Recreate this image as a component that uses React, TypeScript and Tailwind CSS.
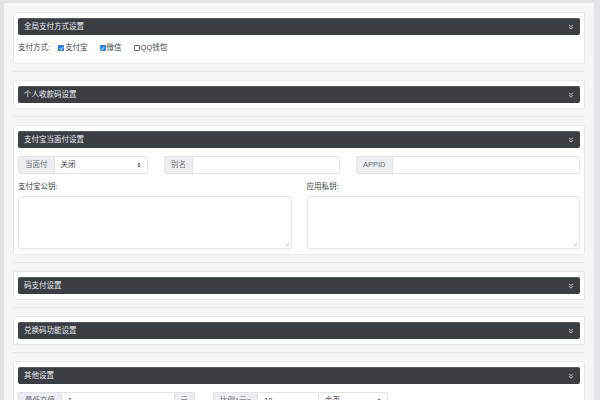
import type { ReactNode } from 'react'

const font = "font-['Liberation_Sans','Noto_Sans_CJK_SC',sans-serif]"

function DoubleDown() {
  return (
    <svg width="6" height="6" viewBox="0 0 6 6" className="text-[#9a9da2]">
      <path d="M1 0.8 L3 2.6 L5 0.8" fill="none" stroke="currentColor" strokeWidth="1.1" />
      <path d="M1 3.2 L3 5 L5 3.2" fill="none" stroke="currentColor" strokeWidth="1.1" />
    </svg>
  )
}

function UpDown() {
  return (
    <svg width="4" height="6" viewBox="0 0 4 6" className="text-[#555]">
      <path d="M0.3 2.4 L2 0.4 L3.7 2.4 Z" fill="currentColor" />
      <path d="M0.3 3.6 L2 5.6 L3.7 3.6 Z" fill="currentColor" />
    </svg>
  )
}

function Check({ checked, label }: { checked?: boolean; label: string }) {
  return (
    <span className="flex items-center gap-[1px]">
      {checked ? (
        <span className="flex h-[6px] w-[6px] items-center justify-center rounded-[1px] bg-[#2f7ee6]">
          <svg width="5" height="5" viewBox="0 0 5 5">
            <path d="M0.8 2.6 L2 3.8 L4.2 1.1" fill="none" stroke="#fff" strokeWidth="0.9" />
          </svg>
        </span>
      ) : (
        <span className="h-[6px] w-[6px] rounded-[1px] border border-[#6b6b6b] bg-white" />
      )}
      <span>{label}</span>
    </span>
  )
}

function Card({ title, children }: { title: string; children?: ReactNode }) {
  return (
    <div className="rounded-[2px] border border-[#e7e9ec] bg-white px-[4px] py-[5px]">
      <div className="flex h-[17px] items-center justify-between rounded-[2px] border-t border-[#55585d] bg-[#3a3d42] pl-[6px] pr-[6px] text-[7.5px] text-[#eef0f2]">
        <span>{title}</span>
        <DoubleDown />
      </div>
      {children}
    </div>
  )
}

function Divider() {
  return <div className="mt-[7px] mb-[8px] h-px bg-[#e7e9ec]" />
}

function Addon({ children }: { children: ReactNode }) {
  return (
    <span className="flex items-center bg-[#eceef1] px-[6px] text-[#6c6f73]">{children}</span>
  )
}

function TextBox({ label }: { label: string }) {
  return (
    <div>
      <div className="flex h-[10px] items-center">{label}</div>
      <div className="relative mt-[4px]">
        <textarea className="block h-[53px] w-full resize-none rounded-[2px] border border-[#e2e5e9] bg-white outline-none" />
        {/* resize grip */}
        <svg width="5" height="5" viewBox="0 0 5 5" className="absolute bottom-[2px] right-[2px]">
          <path d="M0.5 4.5 L4.5 0.5 M2.5 4.5 L4.5 2.5" stroke="#b5b8bc" strokeWidth="0.7" />
        </svg>
      </div>
    </div>
  )
}

export default function App() {
  return (
    <div className={`${font} h-[400px] w-[600px] overflow-hidden bg-[#e3e5e9] pt-[3px] pl-[4px] pr-[6px] text-[7.5px] text-[#3c3f44]`}>
      <div className="h-full bg-[#f5f6f8] px-[9px] pt-[9px]">
        <Card title="全局支付方式设置">
          <div className="mt-[7px] mb-[4px] flex h-[12px] items-center gap-[12px]">
            <span className="mr-[-4px]">支付方式:</span>
            <Check checked label="支付宝" />
            <Check checked label="微信" />
            <Check label="QQ钱包" />
          </div>
        </Card>
        <Divider />
        <Card title="个人收款码设置" />
        <Divider />
        <Card title="支付宝当面付设置">
          <div className="mt-[8px] flex h-[18px] gap-[16px]">
            <div className="flex w-[130px] overflow-hidden rounded-[2px] border border-[#dfe2e6]">
              <Addon>当面付</Addon>
              <div className="flex flex-1 items-center justify-between border-l border-[#dfe2e6] pl-[6px] pr-[6px]">
                <span>关闭</span>
                <UpDown />
              </div>
            </div>
            <div className="flex w-[176px] overflow-hidden rounded-[2px] border border-[#dfe2e6]">
              <Addon>别名</Addon>
              <div className="flex-1 border-l border-[#dfe2e6]" />
            </div>
            <div className="flex flex-1 overflow-hidden rounded-[2px] border border-[#dfe2e6]">
              <Addon>APPID</Addon>
              <div className="flex-1 border-l border-[#dfe2e6]" />
            </div>
          </div>
          <div className="mt-[8px] grid grid-cols-2 gap-[15px]">
            <TextBox label="支付宝公钥:" />
            <TextBox label="应用私钥:" />
          </div>
        </Card>
        <Divider />
        <Card title="码支付设置" />
        <Divider />
        <Card title="兑换码功能设置" />
        <Divider />
        <Card title="其他设置">
          <div className="mt-[8px] flex h-[18px] gap-[18px]">
            <div className="flex w-[177px] overflow-hidden rounded-[2px] border border-[#dfe2e6]">
              <Addon>最低充值</Addon>
              <div className="flex flex-1 items-center border-x border-[#dfe2e6] pl-[6px]">1</div>
              <Addon>元</Addon>
            </div>
            <div className="flex w-[175px] overflow-hidden rounded-[2px] border border-[#dfe2e6]">
              <Addon>比例1元=</Addon>
              <div className="flex w-[62px] items-center border-x border-[#dfe2e6] pl-[6px]">10</div>
              <div className="flex flex-1 items-center justify-between pl-[6px] pr-[6px]">
                <span>金币</span>
                <UpDown />
              </div>
            </div>
          </div>
        </Card>
      </div>
    </div>
  )
}
